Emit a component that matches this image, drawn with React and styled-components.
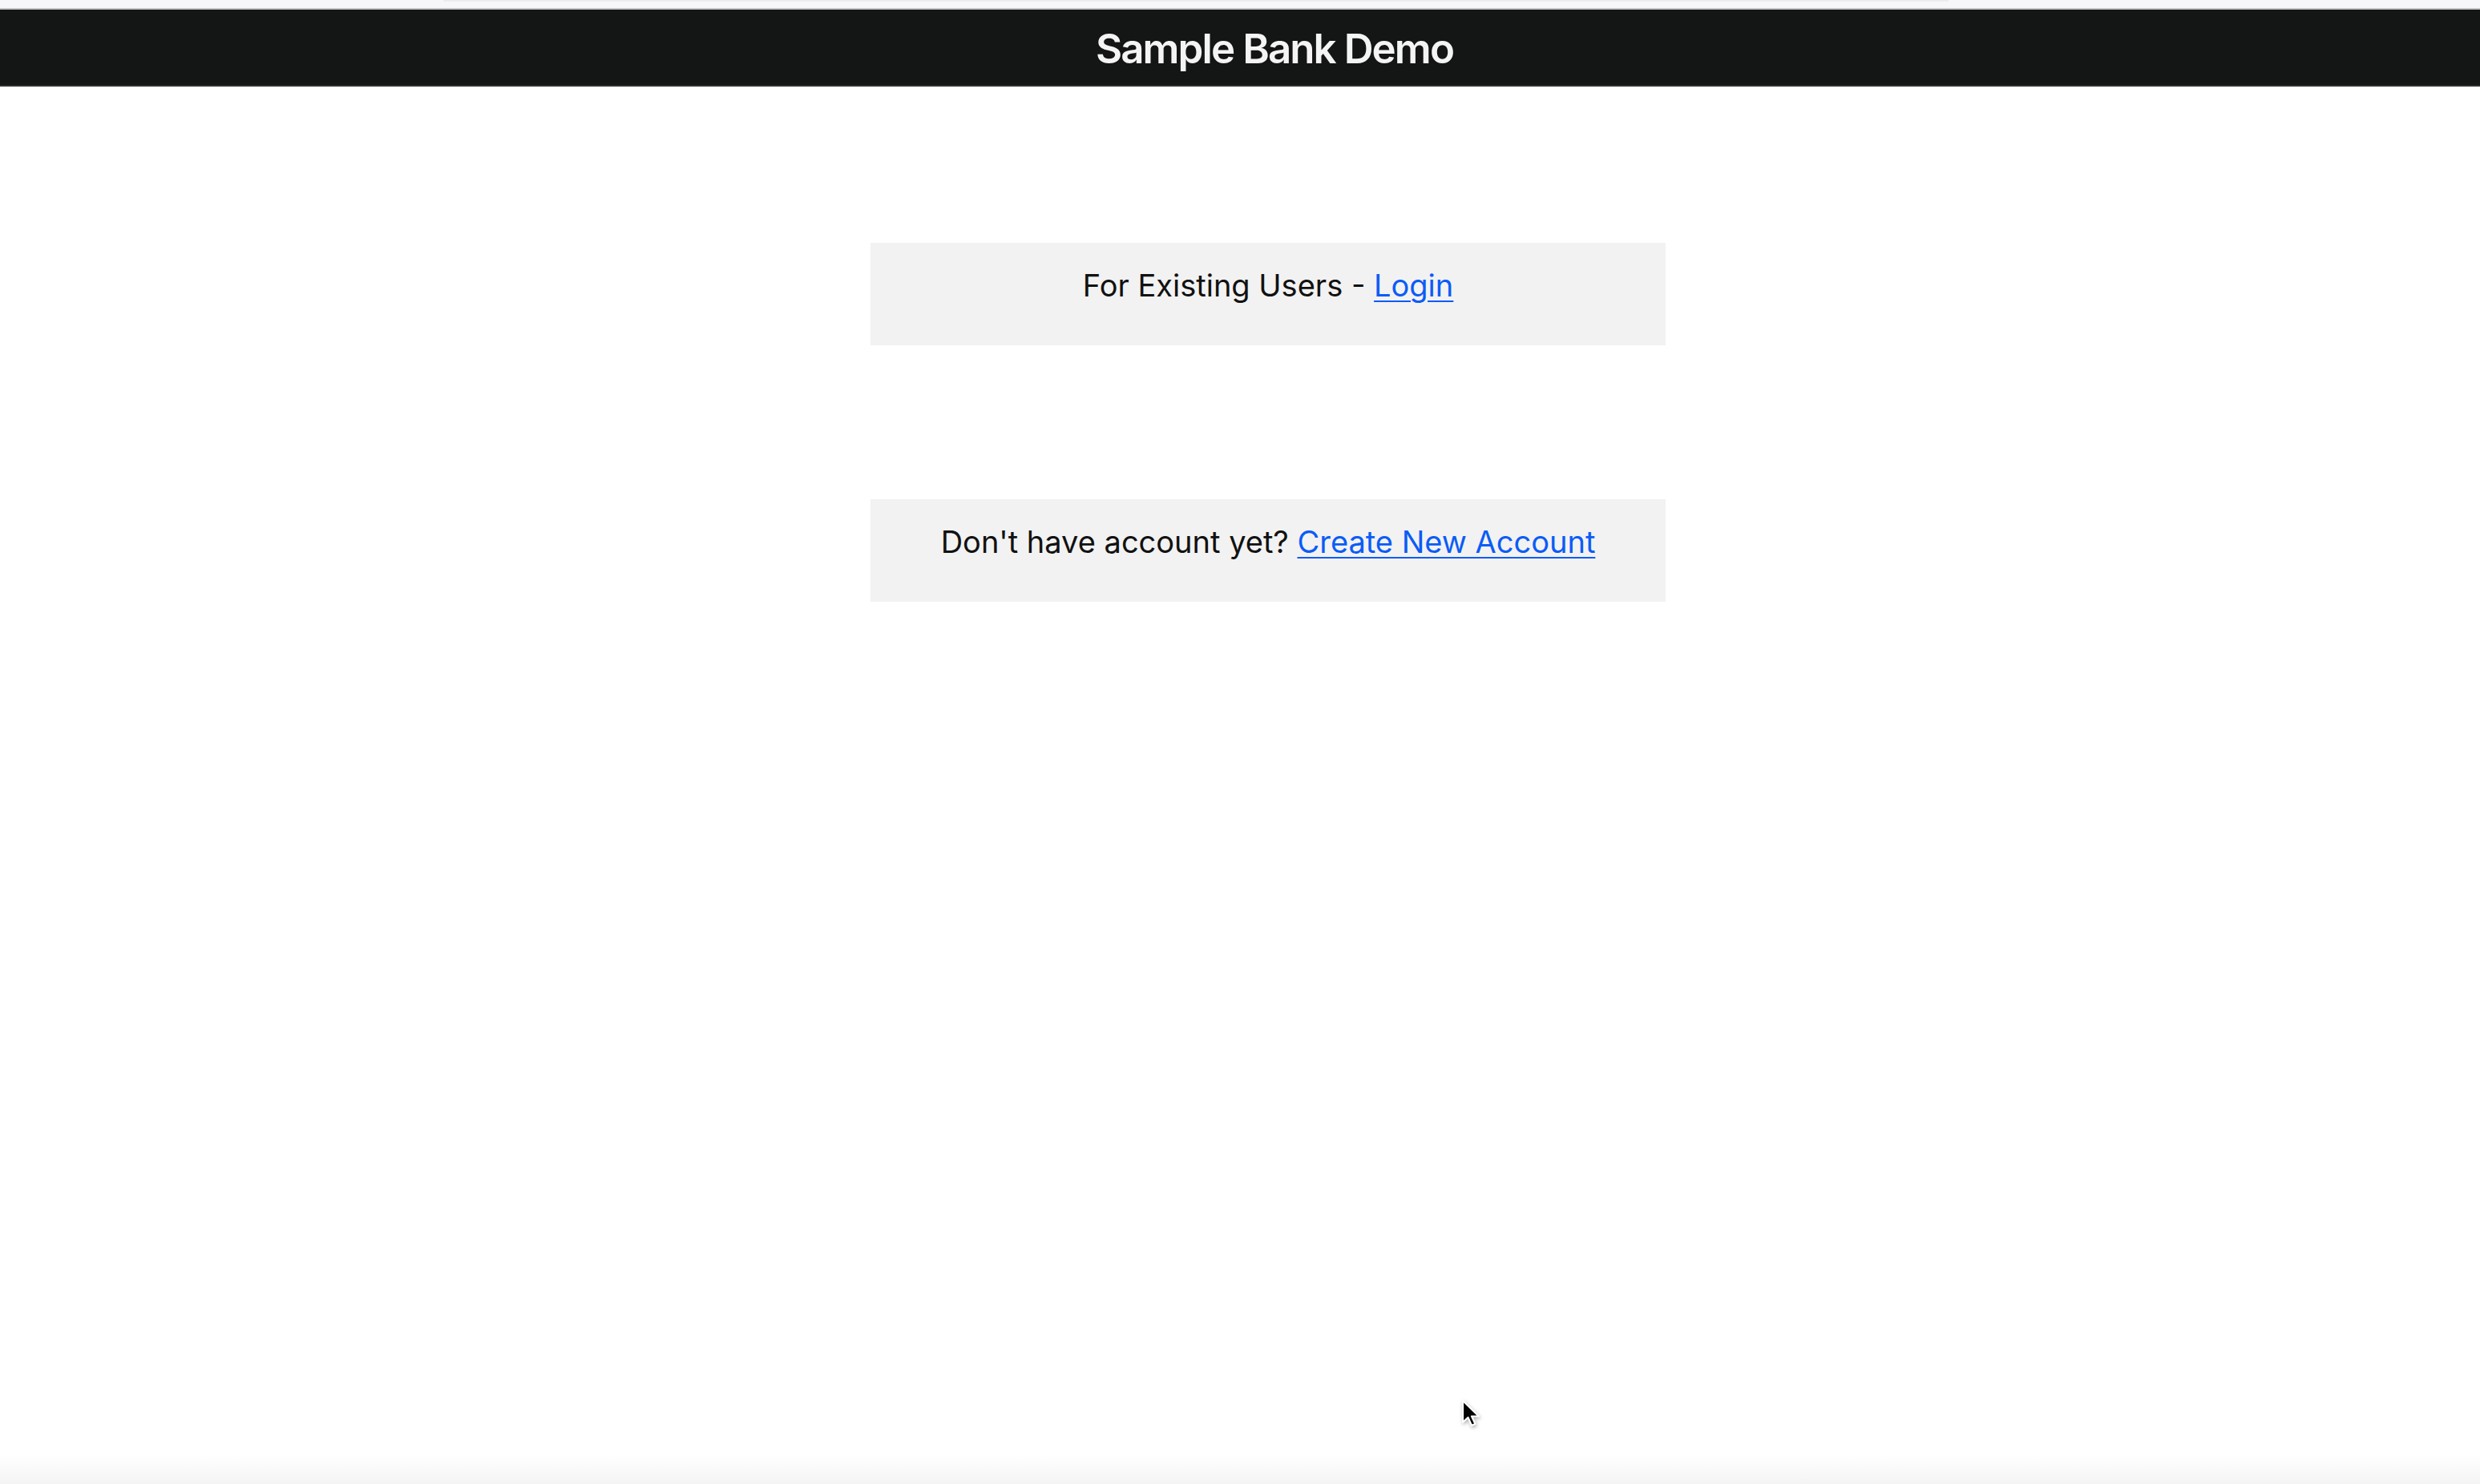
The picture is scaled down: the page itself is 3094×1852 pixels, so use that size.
import React from 'react';
import styled, { createGlobalStyle } from 'styled-components';

const GlobalStyle = createGlobalStyle`
  html, body {
    margin: 0;
    padding: 0;
    background: #ffffff;
  }
  body {
    font-family: Inter, "Liberation Sans", Arial, sans-serif;
  }
`

const Page = styled.div`
  position: relative;
  min-height: 100vh;
  display: flex;
  flex-direction: column;
  background: linear-gradient(to bottom, #ffffff 0%, #ffffff 98%, #f4f4f4 100%);
  overflow: hidden;
`

const TopStrip = styled.div`
  height: 10px;
  background: #f7f7f9;
  display: flex;
  justify-content: center;
`

const TabHint = styled.div`
  width: 1878px;
  height: 2px;
  margin-left: -110px;
  background: #ebebf2;
`

const Header = styled.header`
  height: 94px;
  box-sizing: content-box;
  border-top: 2px solid #c6c6c6;
  border-bottom: 2px solid #2f2f2f;
  background: #141515;
  display: flex;
  align-items: center;
  justify-content: center;
  padding-left: 86px;
`

const Title = styled.h1`
  margin: 0;
  margin-top: 3px;
  color: #f4f4f4;
  font-size: 51px;
  font-weight: 600;
  letter-spacing: -1.9px;
`

const Main = styled.main`
  display: flex;
  flex-direction: column;
  align-items: center;
  gap: 192px;
  padding-top: 195px;
  padding-left: 70px;
`

const Card = styled.div`
  width: 992px;
  height: 128px;
  box-sizing: border-box;
  padding-top: 30px;
  background: #f2f2f2;
  text-align: center;
`

const CardText = styled.p`
  margin: 0;
  font-size: 38px;
  line-height: 46px;
  color: #111111;
`

const TextLink = styled.a`
  color: #0b5cf6;
  text-decoration: underline;
  text-decoration-thickness: 2px;
  text-underline-offset: 5px;
  cursor: pointer;
`

const Cursor = styled.svg`
  position: absolute;
  left: 1822px;
  top: 1745px;
  width: 30px;
  height: 40px;
  filter: drop-shadow(1px 2px 2px rgba(0, 0, 0, 0.3));
`

function App() {
  return (
    <Page>
      <GlobalStyle />
      <TopStrip>
        <TabHint />
      </TopStrip>
      <Header>
        <Title>Sample Bank Demo</Title>
      </Header>
      <Main>
        <Card>
          <CardText>
            For Existing Users - <TextLink href="#login">Login</TextLink>
          </CardText>
        </Card>
        <Card>
          <CardText>
            Don't have account yet? <TextLink href="#signup">Create New Account</TextLink>
          </CardText>
        </Card>
      </Main>
      <Cursor viewBox="0 0 30 40">
        <path
          d="M3 3 L3 30 L9.5 24 L14 34 L18.5 32 L14 22.5 L23 22.5 Z"
          fill="#000000"
          stroke="#ffffff"
          strokeWidth="2.2"
          strokeLinejoin="round"
        />
      </Cursor>
    </Page>
  );
}

export default App;
